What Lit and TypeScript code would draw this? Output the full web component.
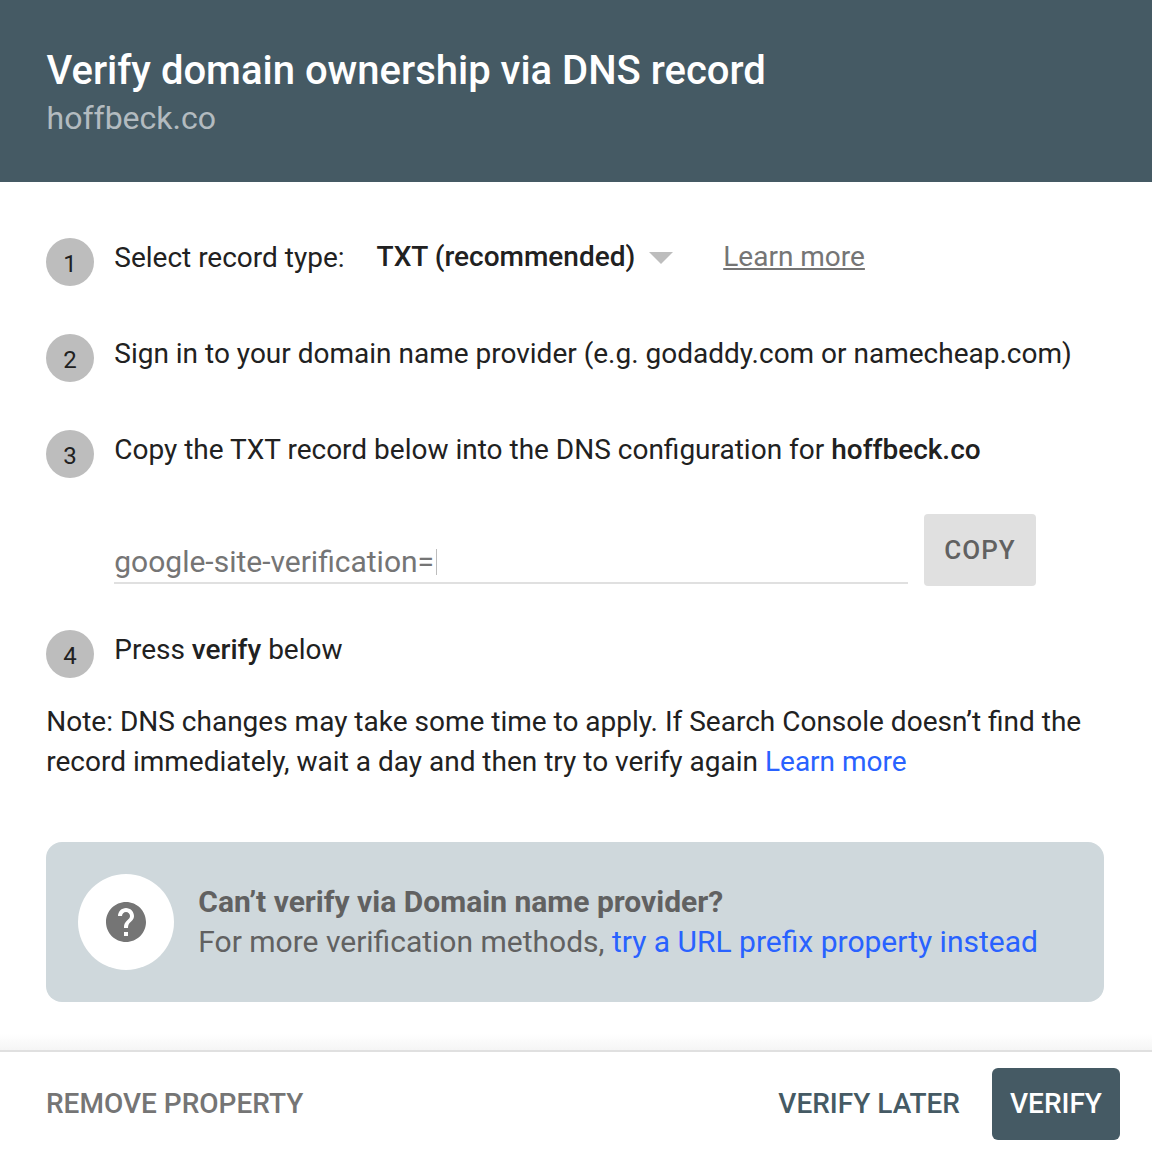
import { LitElement, html, css } from "lit";
import { customElement } from "lit/decorators.js";

@customElement("app-root")
export class AppRoot extends LitElement {
  static styles = css`
    :host { display: block; width: 1152px; height: 1158px; background: #fff; font-family: Roboto, sans-serif; color: #212121; overflow: hidden; }
    .head { background: #455a64; height: 182px; box-sizing: border-box; padding: 47px 46px 0 46.5px; }
    .title { font-size: 40px; font-weight: 500; line-height: 48px; color: #fff; }
    .sub { font-size: 32px; line-height: 48px; color: rgba(255,255,255,.6); margin-top: -1px; }
    .body { padding: 56px 48px 0 46px; height: 868px; box-sizing: border-box; }
    .step { display: flex; gap: 20.25px; height: 96px; font-size: 28px; line-height: 40px; }
    .step.last { height: 72px; }
    .num { width: 48px; height: 48px; border-radius: 50%; background: #bdbdbd; flex: none; display: flex; align-items: center; justify-content: center; font-size: 24px; padding-top: 4px; box-sizing: border-box; }
    .line { white-space: nowrap; display: flex; align-items: flex-start; }
    .sel { font-weight: 500; margin-left: 32px; margin-top: -1px; }
    .caret { width: 0; height: 0; border-left: 12px solid transparent; border-right: 12px solid transparent; border-top: 12px solid #bdbdbd; margin: 14px 0 0 14px; }
    .lm { color: #757575; text-decoration: underline; margin-left: 50px; margin-top: -1px; }
    b { font-weight: 500; }
    .rec { display: flex; margin: -12px 0 0 68px; height: 116px; gap: 16px; }
    .field { width: 794px; height: 70px; box-sizing: border-box; border-bottom: 2px solid #e0e0e0; font-size: 30px; line-height: 40px; color: #757575; padding: 28px 0 0 0.25px; white-space: nowrap; display: flex; align-items: flex-start; }
    .cursor { width: 1px; height: 26px; background: #bdbdbd; margin: 7px 0 0 2px; }
    .copy { width: 112px; height: 72px; background: #e0e0e0; border-radius: 4px; color: #616161; font-size: 26px; font-weight: 500; letter-spacing: 1px; display: flex; align-items: center; justify-content: center; }
    .note { font-size: 28px; line-height: 40px; padding-left: 0.25px; }
    a { color: #2962ff; text-decoration: none; }
    .panel { margin-top: 60px; width: 1058px; height: 160px; background: #cfd8dc; border-radius: 16px; display: flex; align-items: center; padding-left: 32px; box-sizing: border-box; gap: 24.25px; }
    .disc { width: 96px; height: 96px; border-radius: 50%; background: #fff; display: flex; align-items: center; justify-content: center; flex: none; }
    .ptext { font-size: 30px; line-height: 40px; color: #616161; white-space: nowrap; }
    .ptext b { font-size: 30px; font-weight: 700; display: block; }
    .foot { height: 108px; box-sizing: border-box; border-top: 2px solid #e0e0e0; padding: 16px 32px 0 46px; display: flex; align-items: flex-start; position: relative; font-size: 28px; font-weight: 500; }
    .foot::before { content: ""; position: absolute; left: 0; right: 0; top: -18px; height: 16px; background: linear-gradient(to bottom, #fff, #f5f5f5); }
    .rm { color: #757575; line-height: 72px; flex: 1; }
    .later { color: #455a64; line-height: 72px; margin-right: 32px; }
    .verify { background: #455a64; color: #fff; width: 128px; height: 72px; border-radius: 6px; display: flex; align-items: center; justify-content: center; padding-bottom: 2px; box-sizing: border-box; }
  `;

  render() {
    return html`
      <div class="head">
        <div class="title">Verify domain ownership via DNS record</div>
        <div class="sub">hoffbeck.co</div>
      </div>
      <div class="body">
        <div class="step"><div class="num">1</div><div class="line">Select record type:<span class="sel">TXT (recommended)</span><span class="caret"></span><span class="lm">Learn more</span></div></div>
        <div class="step"><div class="num">2</div><div class="line">Sign in to your domain name provider (e.g. godaddy.com or namecheap.com)</div></div>
        <div class="step"><div class="num">3</div><div class="line"><span>Copy the TXT record below into the DNS configuration for <b>hoffbeck.co</b></span></div></div>
        <div class="rec"><div class="field">google-site-verification=<span class="cursor"></span></div><div class="copy">COPY</div></div>
        <div class="step last"><div class="num">4</div><div class="line"><span>Press <b>verify</b> below</span></div></div>
        <div class="note">Note: DNS changes may take some time to apply. If Search Console doesn’t find the<br />record immediately, wait a day and then try to verify again <a>Learn more</a></div>
        <div class="panel">
          <div class="disc">
            <svg width="48" height="48" viewBox="0 0 24 24"><path fill="#757575" d="M12 2C6.48 2 2 6.48 2 12s4.48 10 10 10 10-4.48 10-10S17.52 2 12 2zm1 17h-2v-2h2v2zm2.07-7.75l-.9.92C13.45 12.9 13 13.5 13 15h-2v-.5c0-1.1.45-2.1 1.17-2.83l1.24-1.26c.37-.36.59-.86.59-1.41 0-1.1-.9-2-2-2s-2 .9-2 2H8c0-2.21 1.79-4 4-4s4 1.79 4 4c0 .88-.36 1.68-.93 2.25z"/></svg>
          </div>
          <div class="ptext"><b>Can’t verify via Domain name provider?</b>For more verification methods, <a>try a URL prefix property instead</a></div>
        </div>
      </div>
      <div class="foot">
        <div class="rm">REMOVE PROPERTY</div>
        <div class="later">VERIFY LATER</div>
        <div class="verify">VERIFY</div>
      </div>
    `;
  }
}
